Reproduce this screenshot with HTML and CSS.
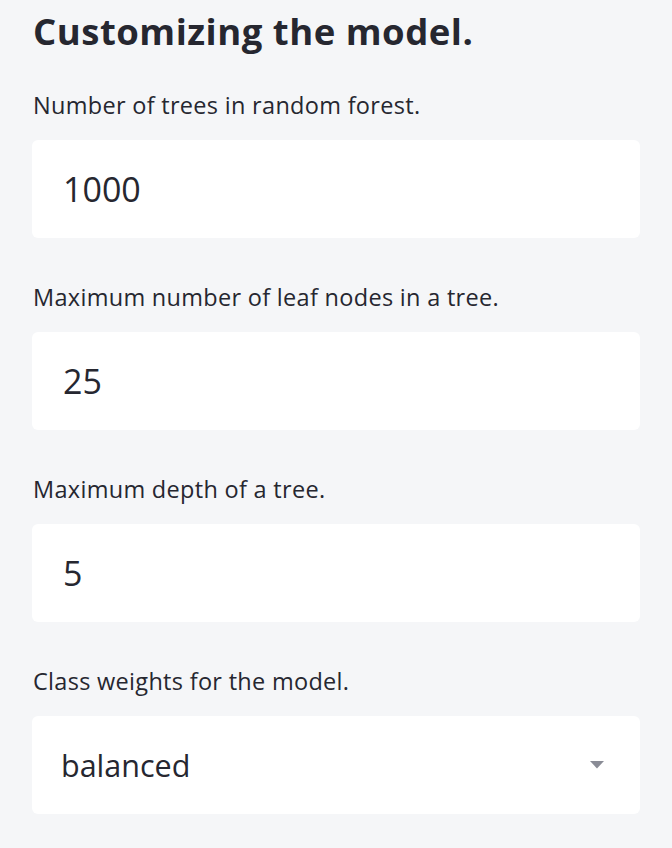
FILE: index.html
```html
<!DOCTYPE html>
<html lang="en">
<head>
<meta charset="utf-8">
<title>Customizing the model</title>
<link rel="stylesheet" href="styles.css">
</head>
<body>
<main class="sidebar">
  <h1 class="title">Customizing the model.</h1>
  <div class="field">
    <label class="label">Number of trees in random forest.</label>
    <div class="box"><span class="value">1000</span></div>
  </div>
  <div class="field">
    <label class="label">Maximum number of leaf nodes in a tree.</label>
    <div class="box"><span class="value">25</span></div>
  </div>
  <div class="field">
    <label class="label">Maximum depth of a tree.</label>
    <div class="box"><span class="value">5</span></div>
  </div>
  <div class="field">
    <label class="label">Class weights for the model.</label>
    <div class="box select">
      <span class="value option">balanced</span>
      <svg class="caret" width="14" height="8" viewBox="0 0 14 8"><path d="M0 0 H14 L7 7.5 Z" fill="#8a8c96"/></svg>
    </div>
  </div>
</main>
</body>
</html>
```
FILE: styles.css
```css
html, body {
  margin: 0;
  padding: 0;
  background: #f5f6f8;
}
body {
  font-family: "Open Sans", "Noto Sans", sans-serif;
  color: #262730;
}
.sidebar {
  padding: 6px 32px 0 32px;
  display: flex;
  flex-direction: column;
}
.title {
  margin: 0 0 34px 1px;
  font-size: 36.5px;
  line-height: 50px;
  font-weight: 700;
  letter-spacing: 0.5px;
}
.field {
  display: flex;
  flex-direction: column;
  margin-bottom: 44px;
}
.label {
  display: block;
  font-size: 23.5px;
  line-height: 31px;
  letter-spacing: 0.3px;
  margin: 0 0 19px 1px;
}
.box {
  height: 98px;
  background: #ffffff;
  border-radius: 6px;
  display: flex;
  align-items: center;
  padding: 0 36px 0 31px;
}
.value {
  font-size: 34px;
}
.select {
  justify-content: space-between;
  padding-left: 29px;
}
.option {
  font-size: 30.5px;
}
.caret {
  display: block;
}
```
